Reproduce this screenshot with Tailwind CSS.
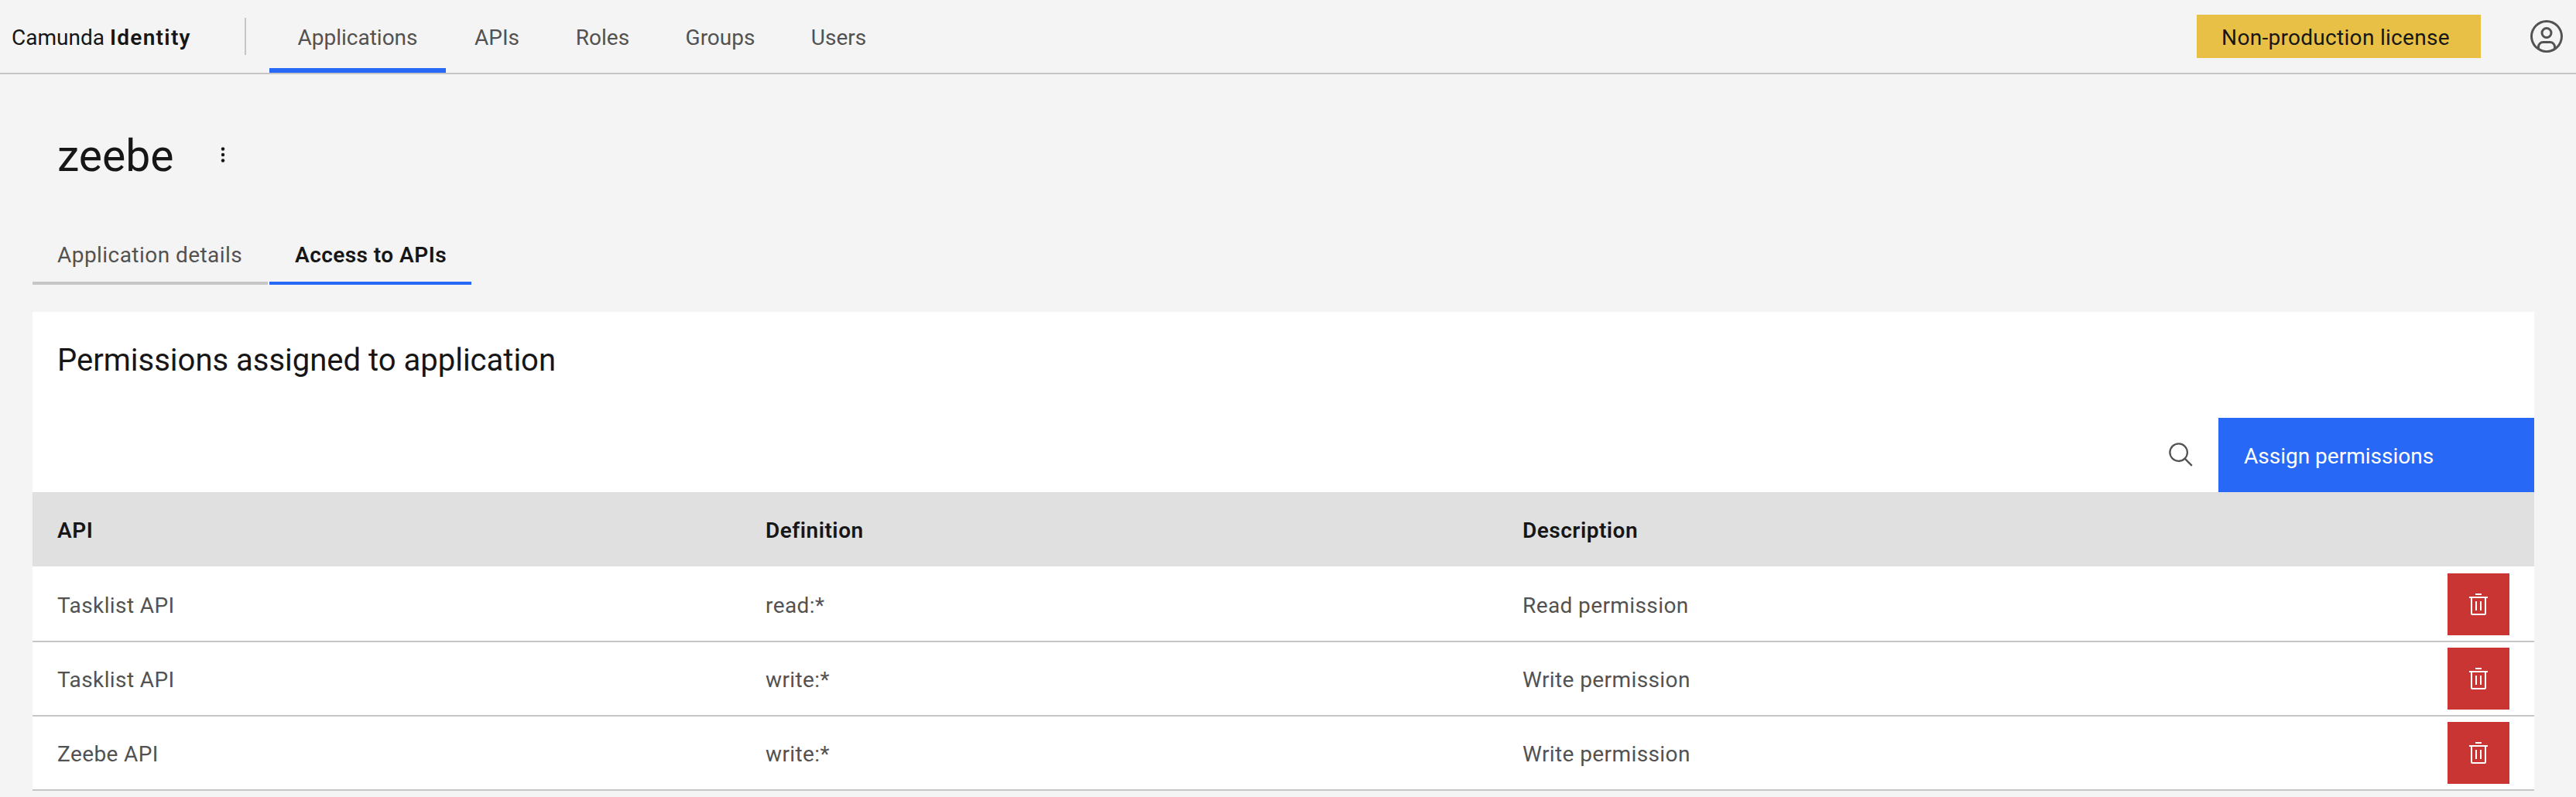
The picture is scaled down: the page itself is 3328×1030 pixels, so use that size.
<!DOCTYPE html>
<html lang="en">
<head>
    <meta charset="UTF-8">
    <title>Camunda Identity</title>
    <script src="https://cdn.jsdelivr.net/npm/@tailwindcss/browser@4"></script>
</head>
<body class="bg-[#f4f4f4] font-['Roboto',sans-serif] text-[#161616] h-[1030px] overflow-hidden">

<!-- top bar -->
<header class="flex items-stretch h-[96px] border-b-2 border-[#c6c6c6]">
    <div class="flex items-center w-[318px] shrink-0 pl-[15px] h-[94px]">
        <span class="text-[28px] w-[302px] pt-[4px]">Camunda <b class="font-semibold tracking-[1.3px]">Identity</b></span>
        <span class="w-[2px] h-[48px] bg-[#c6c6c6] shrink-0"></span>
    </div>
    <nav class="flex ml-[30px] text-[28px] text-[#525252]">
        <a class="flex items-center justify-center w-[228px] border-b-[6px] border-[#2768f6] pt-[10px]">Applications</a>
        <a class="flex items-center justify-center w-[132px] border-b-[6px] border-transparent pt-[10px]">APIs</a>
        <a class="flex items-center justify-center w-[141px] border-b-[6px] border-transparent pt-[10px]">Roles</a>
        <a class="flex items-center justify-center w-[163px] border-b-[6px] border-transparent pt-[10px]">Groups</a>
        <a class="flex items-center justify-center w-[143px] border-b-[6px] border-transparent pt-[10px]">Users</a>
    </nav>
    <div class="ml-auto flex items-center h-[94px]">
        <div class="flex items-center justify-center w-[367px] h-[56px] pt-[4px] pr-[8px] bg-[#e9c046] text-[28px] tracking-[0.3px]">Non-production license</div>
        <svg class="ml-[61px] mr-[14px]" width="48" height="48" viewBox="0 0 32 32" fill="#525252">
            <path d="M16 8a5 5 0 1 0 5 5 5 5 0 0 0-5-5zm0 8a3 3 0 1 1 3-3 3.003 3.003 0 0 1-3 3z"/>
            <path d="M16 2a14 14 0 1 0 14 14A14.016 14.016 0 0 0 16 2zm-6 24.377V25a3.003 3.003 0 0 1 3-3h6a3.003 3.003 0 0 1 3 3v1.377a11.899 11.899 0 0 1-12 0zm13.992-1.451A5.002 5.002 0 0 0 19 20h-6a5.002 5.002 0 0 0-4.992 4.926 12 12 0 1 1 15.985 0z"/>
        </svg>
    </div>
</header>

<main class="pl-[42px] pr-[54px]">
    <!-- title -->
    <div class="flex items-center h-[208px] pl-[32px]">
        <h1 class="text-[57px] leading-none w-[210px] pt-[2px]">zeebe</h1>
        <svg width="8" height="20" viewBox="0 0 8 20" fill="#161616">
            <circle cx="4" cy="2.5" r="2.2"/><circle cx="4" cy="10" r="2.2"/><circle cx="4" cy="17.5" r="2.2"/>
        </svg>
    </div>

    <!-- tabs -->
    <div class="flex gap-[2px] h-[64px] text-[28px] tracking-[0.45px]">
        <div class="flex items-center w-[304px] pl-[32px] pb-[8px] border-b-4 border-[#c6c6c6] text-[#525252]">Application details</div>
        <div class="flex items-center w-[261px] pl-[33px] pb-[8px] border-b-4 border-[#2768f6] font-semibold">Access to APIs</div>
    </div>

    <!-- permissions card -->
    <section class="mt-[35px] bg-white">
        <h2 class="flex items-center h-[137px] pl-[32px] pb-[11px] text-[40px]">Permissions assigned to application</h2>
        <div class="flex justify-end items-center h-[96px]">
            <svg width="36" height="36" viewBox="0 0 32 32" fill="#525252">
                <path d="M29,27.5859l-7.5521-7.5521a11.0177,11.0177,0,1,0-1.4141,1.4141L27.5859,29ZM4,13a9,9,0,1,1,9,9A9.01,9.01,0,0,1,4,13Z"/>
            </svg>
            <button class="flex items-center w-[408px] h-[96px] ml-[30px] pl-[33px] pt-[4px] bg-[#2768f6] text-white text-[28px]">Assign permissions</button>
        </div>

        <div class="grid grid-cols-[915px_978px_1fr] items-center h-[96px] pt-[4px] bg-[#e0e0e0] text-[28px] font-semibold tracking-[0.5px]">
            <div class="pl-[32px]">API</div>
            <div class="pl-[32px]">Definition</div>
            <div class="pl-[32px]">Description</div>
        </div>

        <div class="pt-[2px] text-[28px] text-[#525252] tracking-[0.4px]">
            <div class="grid grid-cols-[915px_978px_1fr] items-center h-[96px] border-b-2 border-[#c6c6c6]">
                <div class="pl-[32px] pt-[4px]">Tasklist API</div>
                <div class="pl-[32px] pt-[4px]">read:*</div>
                <div class="flex items-center justify-between pl-[32px] pr-[32px]">
                    <span class="pt-[4px]">Read permission</span>
                    <button class="flex items-center justify-center w-[80px] h-[80px] bg-[#c83532]">
                        <svg width="32" height="32" viewBox="0 0 32 32" fill="#fff"><path d="M12 12H14V24H12zM18 12H20V24H18z"/><path d="M4 6V8H6V28a2 2 0 002 2H24a2 2 0 002-2V8h2V6zM8 28V8H24V28zM12 2H20V4H12z"/></svg>
                    </button>
                </div>
            </div>
            <div class="grid grid-cols-[915px_978px_1fr] items-center h-[96px] border-b-2 border-[#c6c6c6]">
                <div class="pl-[32px] pt-[4px]">Tasklist API</div>
                <div class="pl-[32px] pt-[4px]">write:*</div>
                <div class="flex items-center justify-between pl-[32px] pr-[32px]">
                    <span class="pt-[4px]">Write permission</span>
                    <button class="flex items-center justify-center w-[80px] h-[80px] bg-[#c83532]">
                        <svg width="32" height="32" viewBox="0 0 32 32" fill="#fff"><path d="M12 12H14V24H12zM18 12H20V24H18z"/><path d="M4 6V8H6V28a2 2 0 002 2H24a2 2 0 002-2V8h2V6zM8 28V8H24V28zM12 2H20V4H12z"/></svg>
                    </button>
                </div>
            </div>
            <div class="grid grid-cols-[915px_978px_1fr] items-center h-[96px] border-b-2 border-[#c6c6c6]">
                <div class="pl-[32px] pt-[4px]">Zeebe API</div>
                <div class="pl-[32px] pt-[4px]">write:*</div>
                <div class="flex items-center justify-between pl-[32px] pr-[32px]">
                    <span class="pt-[4px]">Write permission</span>
                    <button class="flex items-center justify-center w-[80px] h-[80px] bg-[#c83532]">
                        <svg width="32" height="32" viewBox="0 0 32 32" fill="#fff"><path d="M12 12H14V24H12zM18 12H20V24H18z"/><path d="M4 6V8H6V28a2 2 0 002 2H24a2 2 0 002-2V8h2V6zM8 28V8H24V28zM12 2H20V4H12z"/></svg>
                    </button>
                </div>
            </div>
        </div>
    </section>
</main>
</body>
</html>
